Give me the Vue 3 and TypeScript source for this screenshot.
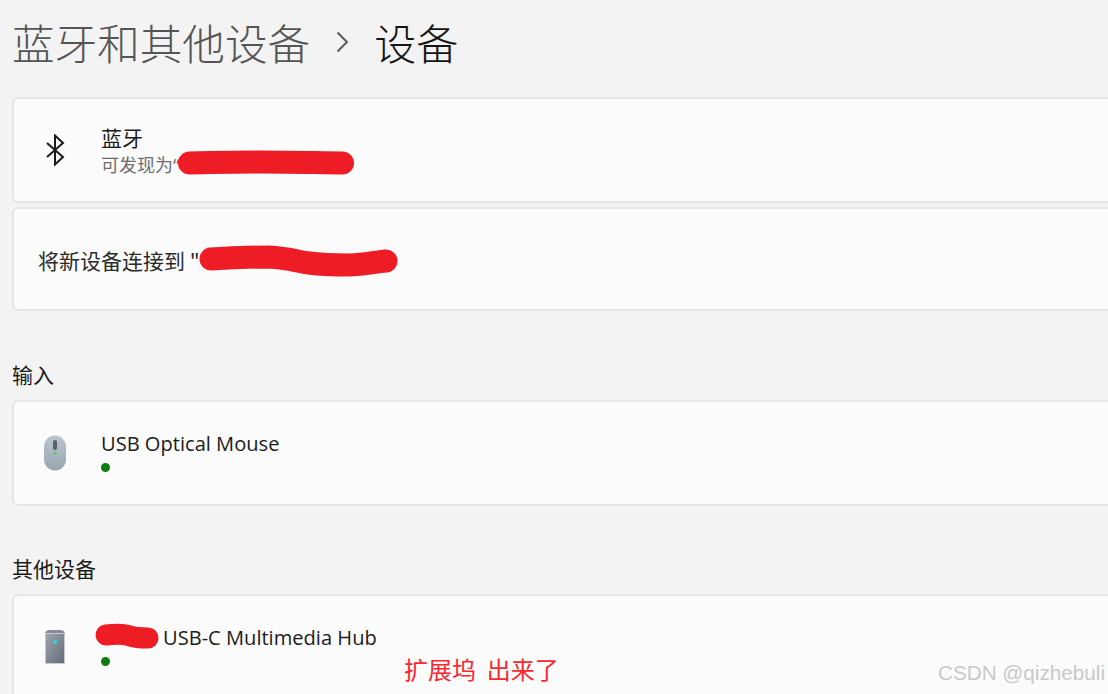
<script setup lang="ts">
const crumbs = { parent: '蓝牙和其他设备', current: '设备' }
const note = '扩展坞  出来了'
</script>

<template>
  <div class="page">
    <header class="title">
      <span class="parent">{{ crumbs.parent }}</span>
      <svg class="chev" width="14" height="24" viewBox="0 0 14 24"><path d="M2.5 2.5 L12 12 L2.5 21.5" fill="none" stroke="#5c5c5c" stroke-width="2"/></svg>
      <span class="current">{{ crumbs.current }}</span>
    </header>

    <section class="card bt">
      <div class="icon-col">
        <svg width="22" height="32" viewBox="0 0 22 32"><path d="M3 9 L19 23 L11 30.5 L11 1.5 L19 9 L3 23" fill="none" stroke="#1a1a1a" stroke-width="2"/></svg>
      </div>
      <div class="text-col raised">
        <div class="name">蓝牙</div>
        <div class="sub">可发现为<span class="quote">“</span></div>
      </div>
      <svg class="scribble s1" width="180" height="28" viewBox="0 0 180 28"><path d="M11.5 15 C40 14.500 50 14 85 14 C110 14 130 14.500 164.500 15" fill="none" stroke="#ee1c25" stroke-width="23" stroke-linecap="round"/></svg>
    </section>

    <section class="card pair">
      <div class="pair-text">将新设备连接到 "</div>
      <svg class="scribble s2" width="200" height="36" viewBox="0 0 200 36"><path d="M12 17 C40 15 55 15 70 15 C90 16 100 20 110 21 C125 23 140 23 150 23 C165 23 175 20 187 19" fill="none" stroke="#ee1c25" stroke-width="23" stroke-linecap="round"/></svg>
    </section>

    <h2 class="group g1">输入</h2>
    <section class="card device">
      <div class="icon-col">
        <svg width="24" height="36" viewBox="0 0 24 36">
          <defs>
            <linearGradient id="mouseFill" x1="0" y1="0" x2="0" y2="1"><stop offset="0" stop-color="#bcc5cf"/><stop offset="1" stop-color="#9aa5b1"/></linearGradient>
          </defs>
          <rect x="1" y="0.5" width="22" height="35" rx="11" fill="url(#mouseFill)"/>
          <rect x="10" y="5" width="4" height="10" rx="2" fill="#5b6169"/>
          <circle cx="12" cy="18" r="1.6" fill="#3fdc5a"/>
        </svg>
      </div>
      <div class="text-col lowered">
        <div class="name latin">USB Optical Mouse</div>
        <div class="dot"></div>
      </div>
    </section>

    <h2 class="group g2">其他设备</h2>
    <section class="card device">
      <div class="icon-col">
        <svg width="22" height="36" viewBox="0 0 22 36">
          <defs>
            <linearGradient id="hubFill" x1="0" y1="0" x2="1" y2="1"><stop offset="0" stop-color="#9ba3ad"/><stop offset="1" stop-color="#656d78"/></linearGradient>
          </defs>
          <path d="M1 4 Q2 1 6 1 L16 1 Q20 1 21 4 Z" fill="#858c96"/>
          <rect x="1" y="4" width="20" height="31" fill="#c6ccd3"/>
          <rect x="2" y="5" width="18" height="29" fill="url(#hubFill)"/>
          <circle cx="11" cy="13" r="2" fill="#29d8e8"/>
        </svg>
      </div>
      <div class="text-col lowered">
        <div class="name latin hub">USB-C Multimedia Hub</div>
        <div class="dot"></div>
      </div>
      <svg class="scribble s3" width="68" height="28" viewBox="0 0 68 28"><path d="M12 13 C20 12 31 12 36 14 C42 16 48 16 54 16" fill="none" stroke="#ee1c25" stroke-width="21" stroke-linecap="round"/></svg>
    </section>

    <div class="note">{{ note }}</div>
    <div class="mark">CSDN @qizhebuli</div>
  </div>
</template>

<style>
html, body { margin: 0; background: #f3f3f3; overflow: hidden; }
</style>

<style scoped>
.page {
  position: relative;
  width: 1108px;
  height: 694px;
  overflow: hidden;
  background: #f3f3f3;
  padding-left: 12px;
  box-sizing: border-box;
  font-family: "Noto Sans CJK SC", "Noto Sans", sans-serif;
  color: #1b1b1b;
}
.title {
  display: flex;
  align-items: center;
  height: 84px;
  font-size: 42.6px;
  font-weight: 300;
  line-height: 1;
}
.parent { color: #555; }
.chev { margin: 0 25px 0 25px; }
.current { color: #141414; font-size: 42px; }
.card {
  position: relative;
  display: flex;
  align-items: center;
  width: 1200px;
  box-sizing: border-box;
  background: #fbfbfb;
  border: 2px solid #e6e6e6;
  border-radius: 6px;
}
.bt { height: 106px; margin-top: 13px; }
.pair { height: 104px; margin-top: 4px; padding-left: 24px; }
.device { height: 106px; }
.icon-col {
  flex: none;
  width: 87px;
  display: flex;
  justify-content: center;
  padding-right: 5px;
  box-sizing: border-box;
}
.text-col { display: flex; flex-direction: column; }
.raised { padding-bottom: 2px; }
.lowered { padding-top: 2px; }
.name { font-size: 21px; line-height: 28px; }
.latin { font-family: "Open Sans", "Noto Sans", sans-serif; font-size: 20.1px; line-height: 27px; }
.hub { margin-left: 62px; }
.sub { margin-top: 2px; font-size: 18px; line-height: 22px; color: #6e6e6e; }
.quote { font-family: "Noto Sans", sans-serif; }
.pair-text { padding-top: 2px; font-size: 21px; line-height: 28px; color: #2a2a2a; }
.dot {
  width: 9px;
  height: 9px;
  margin: 6px 0 6px;
  border-radius: 50%;
  background: #107c10;
}
.group {
  margin: 0;
  font-size: 21px;
  font-weight: 400;
  line-height: 28px;
}
.g1 { margin-top: 49px; margin-bottom: 12px; }
.g2 { margin-top: 48px; margin-bottom: 12px; }
.scribble { position: absolute; }
.s1 { left: 164px; top: 49px; }
.s2 { left: 185px; top: 33px; }
.s3 { left: 80px; top: 26px; }
.note {
  position: absolute;
  left: 404px;
  top: 654px;
  font-size: 24px;
  line-height: 30px;
  white-space: pre;
  color: #f8282f;
}
.mark {
  position: absolute;
  right: 3px;
  top: 660px;
  font-family: "Liberation Sans", sans-serif;
  font-size: 20.7px;
  line-height: 26px;
  color: #c9c9c9;
}
</style>
